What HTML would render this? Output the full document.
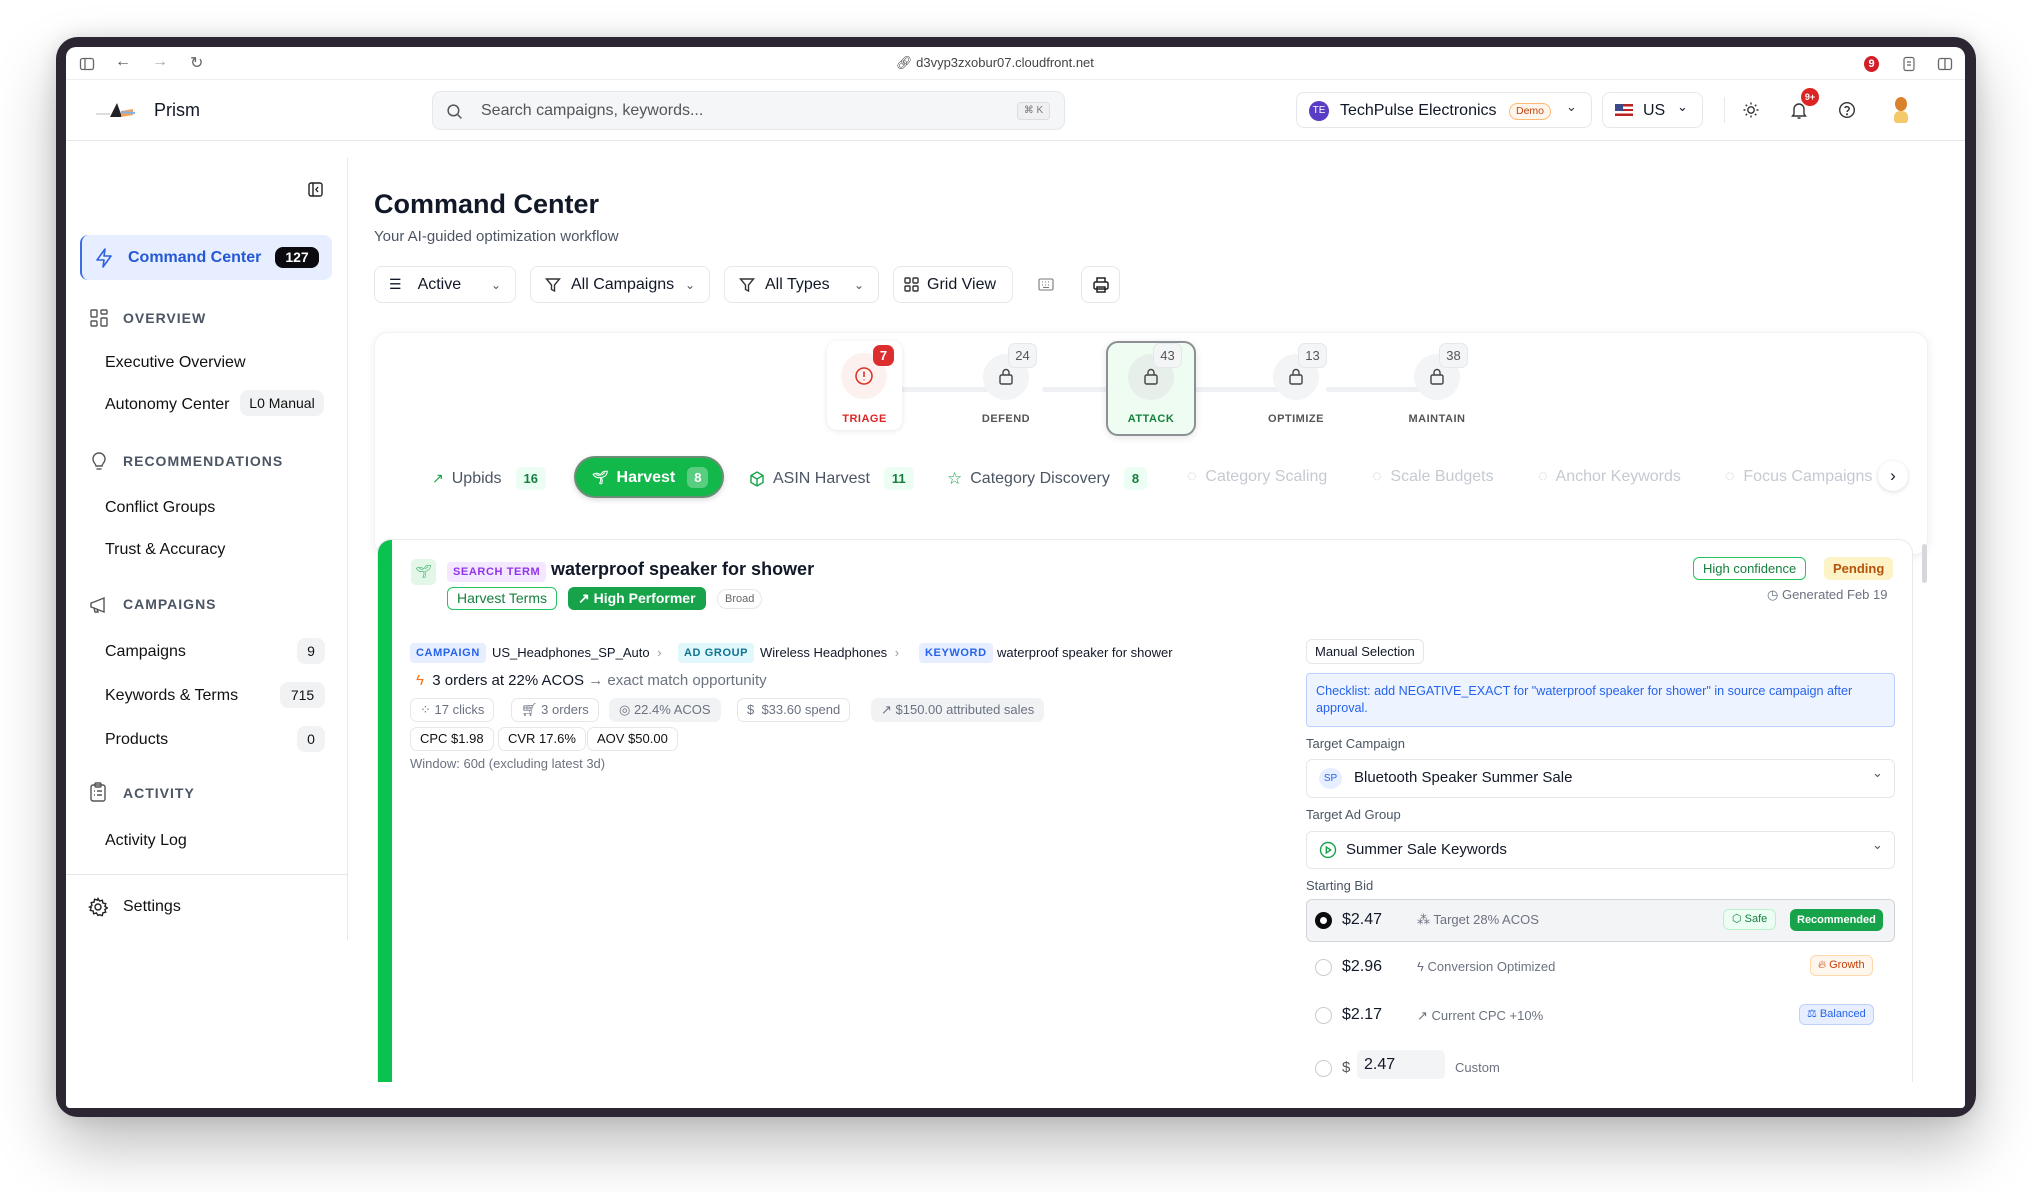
<!DOCTYPE html>
<html><head><meta charset="utf-8"><style>
*{box-sizing:border-box;margin:0;padding:0}
body{width:2032px;height:1192px;background:#fff;font-family:"Liberation Sans",sans-serif;color:#111827;position:relative;overflow:hidden}
.a{position:absolute;white-space:nowrap}
.frame{position:absolute;left:56px;top:37px;width:1920px;height:1080px;background:#2b2632;border-radius:22px;box-shadow:0 30px 60px rgba(0,0,0,.25),0 0 20px rgba(0,0,0,.12)}
.win{position:absolute;left:66px;top:47px;width:1899px;height:1061px;background:#fff;border-radius:10px 10px 4px 4px;overflow:hidden}
.sb{font-size:16px;color:#111}
.sec{font-size:14px;letter-spacing:1px;color:#4b5563;font-weight:600}
.badge{position:absolute;background:#f1f2f4;border-radius:8px;font-size:14px;text-align:center;line-height:26px;height:26px;color:#111}
.btn{position:absolute;border:1px solid #e5e7eb;border-radius:8px;height:37px;font-size:16px;display:flex;align-items:center;gap:10px;padding:0 14px;font-weight:500;background:#fff;white-space:nowrap}
.chip{position:absolute;height:24px;border:1px solid #e5e7eb;border-radius:7px;font-size:13px;line-height:22px;padding:0 9px;color:#6b7280}
.tag{position:absolute;font-size:11px;font-weight:700;letter-spacing:.6px;border-radius:4px;height:20px;line-height:20px;padding:0 6px}
svg{display:block}
</style></head><body>
<div class="frame"></div>
<div class="win">
 <div class="a" style="left:0;top:0;width:1899px;height:33px;border-bottom:1px solid #eee"></div>
 <svg class="a" style="left:13px;top:9px" width="16" height="16" viewBox="0 0 16 16" fill="none" stroke="#666" stroke-width="1.3"><rect x="1.5" y="2.5" width="13" height="11" rx="2"/><path d="M6 3v10"/></svg>
 <div class="a" style="left:49px;top:6px;font-size:16px;color:#555">←</div>
 <div class="a" style="left:86px;top:6px;font-size:16px;color:#aaa">→</div>
 <div class="a" style="left:124px;top:6px;font-size:16px;color:#666">↻</div>
 <div class="a" style="left:830px;top:8px;font-size:13px;color:#444">🔗︎ d3vyp3zxobur07.cloudfront.net</div>
 <div class="a" style="left:1798px;top:9px;width:15px;height:16px;border-radius:50%;background:#d21f2a;color:#fff;font-size:11px;text-align:center;line-height:16px;font-weight:700">9</div>
 <svg class="a" style="left:1835px;top:9px" width="16" height="16" viewBox="0 0 16 16" fill="none" stroke="#666" stroke-width="1.2"><rect x="3" y="1.5" width="10" height="13" rx="2"/><path d="M6 6h4M6 9h4"/></svg>
 <svg class="a" style="left:1871px;top:9px" width="16" height="16" viewBox="0 0 16 16" fill="none" stroke="#666" stroke-width="1.3"><rect x="1.5" y="2.5" width="13" height="11" rx="2"/><path d="M8 3v10"/></svg>

 <div class="a" style="left:0;top:93px;width:1899px;height:1px;background:#e5e7eb"></div>
 <svg class="a" style="left:28px;top:52px" width="46" height="22" viewBox="0 0 46 22"><path d="M2 15h14" stroke="#ddd" stroke-width="2"/><path d="M16 18l7-14 5 14z" fill="#222"/><path d="M27 12l12-2v6l-12 2z" fill="#f4a25b"/><path d="M27 13l14 1" stroke="#7ab3f0" stroke-width="2"/></svg>
 <div class="a" style="left:88px;top:53px;font-size:18px;font-weight:500">Prism</div>
 <div class="a" style="left:366px;top:44px;width:633px;height:39px;background:#f5f6f8;border:1px solid #e5e7eb;border-radius:9px"></div>
 <svg class="a" style="left:380px;top:56px" width="17" height="17" viewBox="0 0 16 16" fill="none" stroke="#555" stroke-width="1.4"><circle cx="7" cy="7" r="5"/><path d="M11 11l3.5 3.5"/></svg>
 <div class="a" style="left:415px;top:55px;font-size:16px;color:#555">Search campaigns, keywords...</div>
 <div class="a" style="left:951px;top:55px;width:33px;height:18px;border:1px solid #ddd;border-radius:4px;font-size:10px;color:#777;text-align:center;line-height:16px;background:#f0f0f2">⌘ K</div>

 <div class="a" style="left:1230px;top:45px;width:296px;height:36px;border:1px solid #e5e7eb;border-radius:8px"></div>
 <div class="a" style="left:1243px;top:54px;width:20px;height:20px;border-radius:50%;background:#5b3cc4;color:#fff;font-size:10px;text-align:center;line-height:20px">TE</div>
 <div class="a" style="left:1274px;top:55px;font-size:16px;font-weight:500">TechPulse Electronics</div>
 <div class="a" style="left:1443px;top:56px;height:17px;padding:0 6px;border:1px solid #fdba74;background:#fff7ed;border-radius:9px;font-size:10.5px;color:#c2410c;line-height:15px">Demo</div>
 <div class="a" style="left:1500px;top:52px;font-size:13px;color:#333">⌄</div>
 <div class="a" style="left:1536px;top:45px;width:101px;height:36px;border:1px solid #e5e7eb;border-radius:8px"></div>
 <div class="a" style="left:1549px;top:57px;width:18px;height:12px;background:linear-gradient(#b22 0 20%,#fff 20% 40%,#b22 40% 60%,#fff 60% 80%,#b22 80%);"><div style="width:8px;height:7px;background:#3c4a8c"></div></div>
 <div class="a" style="left:1577px;top:55px;font-size:16px;font-weight:500">US</div>
 <div class="a" style="left:1611px;top:52px;font-size:13px">⌄</div>
 <div class="a" style="left:1658px;top:50px;width:1px;height:26px;background:#e5e7eb"></div>
 <svg class="a" style="left:1676px;top:54px" width="18" height="18" viewBox="0 0 18 18" fill="none" stroke="#333" stroke-width="1.4"><circle cx="9" cy="9" r="3.2"/><path d="M9 1.5v2M9 14.5v2M1.5 9h2M14.5 9h2M3.7 3.7l1.4 1.4M12.9 12.9l1.4 1.4M3.7 14.3l1.4-1.4M12.9 5.1l1.4-1.4"/></svg>
 <svg class="a" style="left:1724px;top:54px" width="18" height="19" viewBox="0 0 18 19" fill="none" stroke="#333" stroke-width="1.4"><path d="M4 13V8a5 5 0 0110 0v5l1.5 2h-13z"/><path d="M7.5 17h3"/></svg>
 <div class="a" style="left:1735px;top:41px;width:18px;height:18px;border-radius:50%;background:#dc2626;color:#fff;font-size:9px;text-align:center;line-height:18px;font-weight:700">9+</div>
 <svg class="a" style="left:1772px;top:54px" width="18" height="18" viewBox="0 0 18 18" fill="none" stroke="#333" stroke-width="1.4"><circle cx="9" cy="9" r="7.3"/><path d="M6.8 7a2.3 2.3 0 014.4.8c0 1.5-2.2 1.8-2.2 3.2"/><circle cx="9" cy="13.3" r=".4"/></svg>
 <div class="a" style="left:1829px;top:50px;width:12px;height:14px;border-radius:50%;background:#d9822b"></div>
 <div class="a" style="left:1828px;top:64px;width:14px;height:12px;border-radius:6px 6px 3px 3px;background:#f5c86a"></div>

 <div class="a" style="left:281px;top:111px;width:1px;height:782px;background:#e5e7eb"></div>
 <svg class="a" style="left:242px;top:135px" width="15" height="15" viewBox="0 0 15 15" fill="none" stroke="#222" stroke-width="1.4"><rect x="1" y="1" width="13" height="13" rx="2"/><path d="M5 1v13M10 5l-2 2.5 2 2.5"/></svg>
 <div class="a" style="left:14px;top:188px;width:252px;height:45px;background:#e6eeff;border-radius:8px;border-left:2px solid #3b6fe0"></div>
 <svg class="a" style="left:29px;top:201px" width="18" height="20" viewBox="0 0 18 20" fill="none" stroke="#2e62e0" stroke-width="1.6" stroke-linejoin="round"><path d="M10 1L2 12h7l-1 7 8-11H9z"/></svg>
 <div class="a" style="left:62px;top:202px;font-size:16px;font-weight:600;color:#2558d6">Command Center</div>
 <div class="a" style="left:209px;top:200px;width:44px;height:21px;background:#0b0b0f;border-radius:8px;color:#fff;font-size:14px;text-align:center;line-height:21px;font-weight:600">127</div>

 <svg class="a" style="left:24px;top:262px" width="18" height="18" viewBox="0 0 18 18" fill="none" stroke="#555" stroke-width="1.4"><rect x="1" y="1" width="6" height="7" rx="1"/><rect x="11" y="1" width="6" height="4" rx="1"/><rect x="11" y="9" width="6" height="8" rx="1"/><rect x="1" y="12" width="6" height="5" rx="1"/></svg>
 <div class="a sec" style="left:57px;top:263px">OVERVIEW</div>
 <div class="a sb" style="left:39px;top:307px">Executive Overview</div>
 <div class="a sb" style="left:39px;top:349px">Autonomy Center</div>
 <div class="badge" style="left:174px;top:343px;width:84px">L0 Manual</div>
 <svg class="a" style="left:25px;top:405px" width="16" height="20" viewBox="0 0 16 20" fill="none" stroke="#555" stroke-width="1.4"><path d="M5 14c0-2-3-3.5-3-7a6 6 0 0112 0c0 3.5-3 5-3 7z"/><path d="M5.5 17h5"/></svg>
 <div class="a sec" style="left:57px;top:406px">RECOMMENDATIONS</div>
 <div class="a sb" style="left:39px;top:452px">Conflict Groups</div>
 <div class="a sb" style="left:39px;top:494px">Trust &amp; Accuracy</div>
 <svg class="a" style="left:23px;top:549px" width="20" height="18" viewBox="0 0 20 18" fill="none" stroke="#555" stroke-width="1.4"><path d="M2 7v4l3 1 10 4V2L5 6z"/><path d="M5 12l1 4h3l-1-3"/></svg>
 <div class="a sec" style="left:57px;top:549px">CAMPAIGNS</div>
 <div class="a sb" style="left:39px;top:596px">Campaigns</div>
 <div class="badge" style="left:231px;top:591px;width:28px">9</div>
 <div class="a sb" style="left:39px;top:640px">Keywords &amp; Terms</div>
 <div class="badge" style="left:214px;top:635px;width:45px">715</div>
 <div class="a sb" style="left:39px;top:684px">Products</div>
 <div class="badge" style="left:231px;top:679px;width:28px">0</div>
 <svg class="a" style="left:24px;top:735px" width="16" height="20" viewBox="0 0 16 20" fill="none" stroke="#555" stroke-width="1.4"><rect x="1" y="3" width="14" height="16" rx="2"/><rect x="5" y="1" width="6" height="4" rx="1"/><path d="M4 9h1M7 9h5M4 13h1M7 13h5"/></svg>
 <div class="a sec" style="left:57px;top:738px">ACTIVITY</div>
 <div class="a sb" style="left:39px;top:785px">Activity Log</div>
 <div class="a" style="left:0;top:827px;width:281px;height:1px;background:#e5e7eb"></div>
 <svg class="a" style="left:22px;top:850px" width="20" height="20" viewBox="0 0 20 20" fill="none" stroke="#222" stroke-width="1.4"><circle cx="10" cy="10" r="3"/><path d="M10 1.5l1.5 2.5 2.8-.8.6 2.8 2.8.6-.8 2.8 2.5 1.5-2.5 1.5.8 2.8-2.8.6-.6 2.8-2.8-.8L10 18.5l-1.5-2.5-2.8.8-.6-2.8-2.8-.6.8-2.8L1.5 10 4 8.5l-.8-2.8 2.8-.6.6-2.8 2.8.8z"/></svg>
 <div class="a sb" style="left:57px;top:851px">Settings</div>

 <div class="a" style="left:308px;top:142px;font-size:27px;font-weight:700">Command Center</div>
 <div class="a" style="left:308px;top:181px;font-size:15px;color:#4b5563">Your AI-guided optimization workflow</div>
 <div class="btn" style="left:308px;top:219px;width:142px"><span style="font-size:14px">☰</span><span style="margin-left:6px">Active</span><span style="margin-left:auto;font-size:12px;color:#555">⌄</span></div>
 <div class="btn" style="left:464px;top:219px;width:180px"><svg width="16" height="16" viewBox="0 0 16 16" fill="none" stroke="#333" stroke-width="1.4"><path d="M1.5 2h13L9.5 8v6l-3-1.5V8z"/></svg>All Campaigns<span style="margin-left:auto;font-size:12px;color:#555">⌄</span></div>
 <div class="btn" style="left:658px;top:219px;width:155px"><svg width="16" height="16" viewBox="0 0 16 16" fill="none" stroke="#333" stroke-width="1.4"><path d="M1.5 2h13L9.5 8v6l-3-1.5V8z"/></svg>All Types<span style="margin-left:auto;font-size:12px;color:#555">⌄</span></div>
 <div class="btn" style="left:827px;top:219px;width:120px;gap:8px;padding:0 10px"><svg width="15" height="15" viewBox="0 0 15 15" fill="none" stroke="#333" stroke-width="1.4"><rect x="1" y="1" width="5" height="5" rx="1"/><rect x="9" y="1" width="5" height="5" rx="1"/><rect x="1" y="9" width="5" height="5" rx="1"/><rect x="9" y="9" width="5" height="5" rx="1"/></svg>Grid View</div>
 <svg class="a" style="left:972px;top:231px" width="16" height="13" viewBox="0 0 16 13" fill="none" stroke="#777" stroke-width="1.1"><rect x="1" y="1" width="14" height="11" rx="1.5"/><path d="M4 4h1M7 4h1M10 4h1M4 7h1M7 7h1M10 7h1M5 9.5h6"/></svg>
 <div class="btn" style="left:1015px;top:219px;width:39px;padding:0;justify-content:center"><svg width="18" height="18" viewBox="0 0 18 18" fill="none" stroke="#222" stroke-width="1.5"><path d="M5 6V2h8v4"/><rect x="2" y="6" width="14" height="7" rx="1.5"/><rect x="5" y="11" width="8" height="5"/></svg></div>

 <div class="a" style="left:308px;top:285px;width:1554px;height:223px;border-radius:14px;background:#fff;box-shadow:0 2px 10px rgba(0,0,0,.07);border:1px solid #f1f1f3"></div>
 <div class="a" style="left:834px;top:340px;width:100px;height:5px;background:#eef0f3;border-radius:3px"></div>
 <div class="a" style="left:976px;top:340px;width:100px;height:5px;background:#eef0f3;border-radius:3px"></div>
 <div class="a" style="left:1120px;top:340px;width:100px;height:5px;background:#eef0f3;border-radius:3px"></div>
 <div class="a" style="left:1260px;top:340px;width:100px;height:5px;background:#eef0f3;border-radius:3px"></div>
 <div class="a" style="left:761px;top:294px;width:75px;height:89px;border-radius:10px;background:#fff;box-shadow:0 1px 6px rgba(0,0,0,.1)"></div>
 <div class="a" style="left:775px;top:306px;width:46px;height:46px;border-radius:50%;background:#fdf1ef"></div>
 <svg class="a" style="left:788px;top:319px" width="20" height="20" viewBox="0 0 20 20" fill="none" stroke="#e0332b" stroke-width="1.6"><circle cx="10" cy="10" r="8"/><path d="M10 5.5v5.5M10 13.5v.8"/></svg>
 <div class="a" style="left:807px;top:298px;width:21px;height:21px;border-radius:7px;background:#dc2e2e;color:#fff;font-size:13px;font-weight:700;text-align:center;line-height:21px">7</div>
 <div class="a" style="left:761px;top:366px;width:75px;text-align:center;font-size:11px;font-weight:700;color:#dc2626;letter-spacing:.5px">TRIAGE</div>
 <div class="a" style="left:917px;top:307px;width:46px;height:46px;border-radius:50%;background:#f3f4f6"></div>
 <svg class="a" style="left:933px;top:321px" width="14" height="17" viewBox="0 0 14 17" fill="none" stroke="#444" stroke-width="1.4"><rect x="1" y="7" width="12" height="9" rx="1.5"/><path d="M4 7V4.5a3 3 0 016 0V7"/></svg>
 <div class="a" style="left:942px;top:296px;width:29px;height:25px;border-radius:7px;background:#f4f5f7;border:1px solid #e5e7eb;font-size:13px;color:#555;text-align:center;line-height:23px">24</div>
 <div class="a" style="left:905px;top:366px;width:70px;text-align:center;font-size:11px;font-weight:600;color:#555;letter-spacing:.5px">DEFEND</div>
 <div class="a" style="left:1040px;top:294px;width:90px;height:95px;border-radius:12px;background:#eefcf1;border:2px solid #8c8f96;box-shadow:0 2px 8px rgba(0,0,0,.1)"></div>
 <div class="a" style="left:1062px;top:307px;width:46px;height:46px;border-radius:50%;background:#e7efea"></div>
 <svg class="a" style="left:1078px;top:321px" width="14" height="17" viewBox="0 0 14 17" fill="none" stroke="#444" stroke-width="1.4"><rect x="1" y="7" width="12" height="9" rx="1.5"/><path d="M4 7V4.5a3 3 0 016 0V7"/></svg>
 <div class="a" style="left:1087px;top:296px;width:29px;height:25px;border-radius:7px;background:#f4f5f7;border:1px solid #e5e7eb;font-size:13px;color:#555;text-align:center;line-height:23px">43</div>
 <div class="a" style="left:1040px;top:366px;width:90px;text-align:center;font-size:11px;font-weight:700;color:#15803d;letter-spacing:.5px">ATTACK</div>
 <div class="a" style="left:1207px;top:307px;width:46px;height:46px;border-radius:50%;background:#f3f4f6"></div>
 <svg class="a" style="left:1223px;top:321px" width="14" height="17" viewBox="0 0 14 17" fill="none" stroke="#444" stroke-width="1.4"><rect x="1" y="7" width="12" height="9" rx="1.5"/><path d="M4 7V4.5a3 3 0 016 0V7"/></svg>
 <div class="a" style="left:1232px;top:296px;width:29px;height:25px;border-radius:7px;background:#f4f5f7;border:1px solid #e5e7eb;font-size:13px;color:#555;text-align:center;line-height:23px">13</div>
 <div class="a" style="left:1190px;top:366px;width:80px;text-align:center;font-size:11px;font-weight:600;color:#555;letter-spacing:.5px">OPTIMIZE</div>
 <div class="a" style="left:1348px;top:307px;width:46px;height:46px;border-radius:50%;background:#f3f4f6"></div>
 <svg class="a" style="left:1364px;top:321px" width="14" height="17" viewBox="0 0 14 17" fill="none" stroke="#444" stroke-width="1.4"><rect x="1" y="7" width="12" height="9" rx="1.5"/><path d="M4 7V4.5a3 3 0 016 0V7"/></svg>
 <div class="a" style="left:1373px;top:296px;width:29px;height:25px;border-radius:7px;background:#f4f5f7;border:1px solid #e5e7eb;font-size:13px;color:#555;text-align:center;line-height:23px">38</div>
 <div class="a" style="left:1326px;top:366px;width:90px;text-align:center;font-size:11px;font-weight:600;color:#555;letter-spacing:.5px">MAINTAIN</div>

 <div class="a" style="left:366px;top:420px;font-size:16px;color:#4b5563;display:flex;align-items:center;gap:8px"><span style="color:#16a34a;font-size:14px">↗</span>Upbids<span style="background:#ecfdf3;color:#15803d;font-size:13px;font-weight:600;padding:4px 8px;border-radius:6px;margin-left:6px">16</span></div>
 <div class="a" style="left:508px;top:409px;width:150px;height:42px;border-radius:21px;background:#12b84a;border:2px solid #6b8f76;box-shadow:0 2px 6px rgba(0,0,0,.15)"></div>
 <div class="a" style="left:526px;top:420px;font-size:16px;font-weight:600;color:#fff;display:flex;align-items:center;gap:8px"><span style="font-size:13px">🌱︎</span>Harvest<span style="background:rgba(255,255,255,.3);font-size:13px;padding:3px 7px;border-radius:6px;margin-left:4px">8</span></div>
 <div class="a" style="left:683px;top:420px;font-size:16px;color:#4b5563;display:flex;align-items:center;gap:8px"><svg width="16" height="16" viewBox="0 0 16 16" fill="none" stroke="#16a34a" stroke-width="1.4"><path d="M8 1l6 3.5v7L8 15 2 11.5v-7z"/><path d="M2 4.5L8 8l6-3.5M8 8v7"/></svg>ASIN Harvest<span style="background:#ecfdf3;color:#15803d;font-size:13px;font-weight:600;padding:4px 8px;border-radius:6px;margin-left:6px">11</span></div>
 <div class="a" style="left:881px;top:420px;font-size:16px;color:#4b5563;display:flex;align-items:center;gap:8px"><span style="color:#16a34a;font-size:17px">☆</span>Category Discovery<span style="background:#ecfdf3;color:#15803d;font-size:13px;font-weight:600;padding:4px 8px;border-radius:6px;margin-left:6px">8</span></div>
 <div class="a" style="left:1121px;top:421px;font-size:16px;color:#c4cad2">◌&nbsp; Category Scaling</div>
 <div class="a" style="left:1306px;top:421px;font-size:16px;color:#c4cad2">◌&nbsp; Scale Budgets</div>
 <div class="a" style="left:1472px;top:421px;font-size:16px;color:#c4cad2">◌&nbsp; Anchor Keywords</div>
 <div class="a" style="left:1659px;top:421px;font-size:16px;color:#c4cad2">◌&nbsp; Focus Campaigns</div>
 <div class="a" style="left:1812px;top:414px;width:30px;height:30px;border-radius:50%;background:#fff;box-shadow:0 1px 4px rgba(0,0,0,.15)"></div>
 <div class="a" style="left:1812px;top:414px;width:30px;height:30px;text-align:center;line-height:29px;font-size:17px">›</div>

 <div class="a" style="left:311px;top:492px;width:1536px;height:620px;border-radius:14px 14px 0 0;border:1px solid #e8e9ec;border-bottom:none;background:#fff;overflow:hidden"><div style="position:absolute;left:0;top:0;width:14px;height:100%;background:#0ac24f"></div></div>
 <div class="a" style="left:1856px;top:497px;width:5px;height:39px;background:#d5d7db;border-radius:3px"></div>
 <div class="a" style="left:345px;top:512px;width:25px;height:26px;border-radius:5px;background:#e3f7e9;color:#16a34a;font-size:13px;text-align:center;line-height:26px">🌱︎</div>
 <div class="tag" style="left:381px;top:515px;background:#f3e8ff;color:#9333ea">SEARCH TERM</div>
 <div class="a" style="left:485px;top:512px;font-size:18px;font-weight:600">waterproof speaker for shower</div>
 <div class="a" style="left:381px;top:540px;height:23px;padding:0 9px;border:1px solid #22c55e;border-radius:6px;font-size:14px;color:#15803d;line-height:21px">Harvest Terms</div>
 <div class="a" style="left:502px;top:540px;height:23px;padding:0 10px;background:#16a34a;border-radius:6px;font-size:14px;color:#fff;line-height:23px;font-weight:600">↗ High Performer</div>
 <div class="a" style="left:651px;top:542px;height:20px;padding:0 7px;border:1px solid #e5e7eb;border-radius:10px;font-size:11px;color:#666;line-height:18px">Broad</div>

 <div class="a" style="left:1627px;top:510px;height:23px;padding:0 9px;border:1px solid #22c55e;border-radius:6px;font-size:13px;color:#15803d;line-height:21px">High confidence</div>
 <div class="a" style="left:1758px;top:510px;height:23px;padding:0 9px;background:#fdf3c7;border-radius:6px;font-size:13px;color:#b45309;line-height:23px;font-weight:600">Pending</div>
 <div class="a" style="left:1701px;top:540px;font-size:13px;color:#6b7280">◷ Generated Feb 19</div>

 <div class="tag" style="left:344px;top:596px;background:#e6eeff;color:#2563eb">CAMPAIGN</div>
 <div class="a" style="left:426px;top:598px;font-size:13px">US_Headphones_SP_Auto <span style="color:#999;margin-left:4px">›</span></div>
 <div class="tag" style="left:612px;top:596px;background:#e0f7fc;color:#0e7490">AD GROUP</div>
 <div class="a" style="left:694px;top:598px;font-size:13px">Wireless Headphones <span style="color:#999;margin-left:4px">›</span></div>
 <div class="tag" style="left:853px;top:596px;background:#e6eeff;color:#2563eb">KEYWORD</div>
 <div class="a" style="left:931px;top:598px;font-size:13px">waterproof speaker for shower</div>
 <div class="a" style="left:350px;top:625px;font-size:15px"><span style="color:#f97316">ϟ</span>&nbsp; <span style="font-weight:500">3 orders at 22% ACOS</span> <span style="color:#6b7280">→ exact match opportunity</span></div>
 <div class="chip" style="left:344px;top:651px">⁘ 17 clicks</div>
 <div class="chip" style="left:445px;top:651px">🛒︎ 3 orders</div>
 <div class="chip" style="left:543px;top:651px;background:#f1f2f4;border-color:#f1f2f4">◎ 22.4% ACOS</div>
 <div class="chip" style="left:671px;top:651px">$&nbsp; $33.60 spend</div>
 <div class="chip" style="left:805px;top:651px;background:#f1f2f4;border-color:#f1f2f4">↗ $150.00 attributed sales</div>
 <div class="chip" style="left:344px;top:680px;color:#111">CPC $1.98</div>
 <div class="chip" style="left:432px;top:680px;color:#111">CVR 17.6%</div>
 <div class="chip" style="left:521px;top:680px;color:#111">AOV $50.00</div>
 <div class="a" style="left:344px;top:709px;font-size:13px;color:#6b7280">Window: 60d (excluding latest 3d)</div>

 <div class="a" style="left:1240px;top:592px;height:25px;padding:0 8px;border:1px solid #e5e7eb;border-radius:6px;font-size:13px;line-height:23px;font-weight:500">Manual Selection</div>
 <div class="a" style="left:1240px;top:626px;width:589px;height:54px;background:#eef4ff;border:1px solid #bcd0fb;border-radius:4px;font-size:12.6px;color:#2563eb;padding:9px 9px;line-height:17px;white-space:normal">Checklist: add NEGATIVE_EXACT for "waterproof speaker for shower" in source campaign after approval.</div>
 <div class="a" style="left:1240px;top:689px;font-size:13px;color:#4b5563">Target Campaign</div>
 <div class="a" style="left:1240px;top:712px;width:589px;height:39px;border:1px solid #e5e7eb;border-radius:6px"></div>
 <div class="a" style="left:1253px;top:721px;width:23px;height:21px;border-radius:50%;background:#e6eeff;color:#2563eb;font-size:10px;text-align:center;line-height:21px">SP</div>
 <div class="a" style="left:1288px;top:722px;font-size:15px">Bluetooth Speaker Summer Sale</div>
 <div class="a" style="left:1806px;top:718px;font-size:13px;color:#555">⌄</div>
 <div class="a" style="left:1240px;top:760px;font-size:13px;color:#4b5563">Target Ad Group</div>
 <div class="a" style="left:1240px;top:784px;width:589px;height:38px;border:1px solid #e5e7eb;border-radius:6px"></div>
 <svg class="a" style="left:1253px;top:794px" width="18" height="18" viewBox="0 0 18 18" fill="none" stroke="#16a34a" stroke-width="1.4"><circle cx="9" cy="9" r="7.5"/><path d="M7.3 6v6l4.5-3z"/></svg>
 <div class="a" style="left:1280px;top:794px;font-size:15px">Summer Sale Keywords</div>
 <div class="a" style="left:1806px;top:790px;font-size:13px;color:#555">⌄</div>
 <div class="a" style="left:1240px;top:831px;font-size:13px;color:#4b5563;font-weight:500">Starting Bid</div>
 <div class="a" style="left:1240px;top:852px;width:589px;height:43px;background:#f3f4f6;border:1px solid #d1d5db;border-radius:6px"></div>
 <div class="a" style="left:1249px;top:865px;width:17px;height:17px;border-radius:50%;border:5px solid #0b0b0f;background:#fff"></div>
 <div class="a" style="left:1276px;top:864px;font-size:16px;font-weight:500">$2.47</div>
 <div class="a" style="left:1351px;top:865px;font-size:13px;color:#6b7280">⁂ Target 28% ACOS</div>
 <div class="a" style="left:1657px;top:862px;height:21px;padding:0 8px;background:#ecfdf3;border:1px solid #bbf0cd;border-radius:6px;font-size:11px;color:#15803d;line-height:19px">⬡ Safe</div>
 <div class="a" style="left:1724px;top:862px;height:22px;padding:0 7px;background:#16a34a;border-radius:6px;font-size:11px;color:#fff;line-height:22px;font-weight:600">Recommended</div>
 <div class="a" style="left:1249px;top:912px;width:17px;height:17px;border-radius:50%;border:1.5px solid #ccc"></div>
 <div class="a" style="left:1276px;top:911px;font-size:16px;font-weight:500">$2.96</div>
 <div class="a" style="left:1351px;top:912px;font-size:13px;color:#6b7280">ϟ Conversion Optimized</div>
 <div class="a" style="left:1744px;top:908px;height:21px;padding:0 7px;background:#fff7ed;border:1px solid #fed7aa;border-radius:6px;font-size:11px;color:#c2410c;line-height:19px">🔥︎ Growth</div>
 <div class="a" style="left:1249px;top:960px;width:17px;height:17px;border-radius:50%;border:1.5px solid #ccc"></div>
 <div class="a" style="left:1276px;top:959px;font-size:16px;font-weight:500">$2.17</div>
 <div class="a" style="left:1351px;top:961px;font-size:13px;color:#6b7280">↗ Current CPC +10%</div>
 <div class="a" style="left:1733px;top:957px;height:21px;padding:0 7px;background:#e6eeff;border:1px solid #bcd0fb;border-radius:6px;font-size:11px;color:#2563eb;line-height:19px">⚖ Balanced</div>
 <div class="a" style="left:1249px;top:1013px;width:17px;height:17px;border-radius:50%;border:1.5px solid #ccc"></div>
 <div class="a" style="left:1276px;top:1012px;font-size:15px;color:#555">$</div>
 <div class="a" style="left:1291px;top:1003px;width:88px;height:29px;background:#f3f4f6;border-radius:5px;font-size:16px;padding:6px 7px">2.47</div>
 <div class="a" style="left:1389px;top:1013px;font-size:13px;color:#6b7280">Custom</div>
 <div class="a" style="left:0;top:1035px;width:1899px;height:30px;background:#fff"></div>
</div>
</body></html>
